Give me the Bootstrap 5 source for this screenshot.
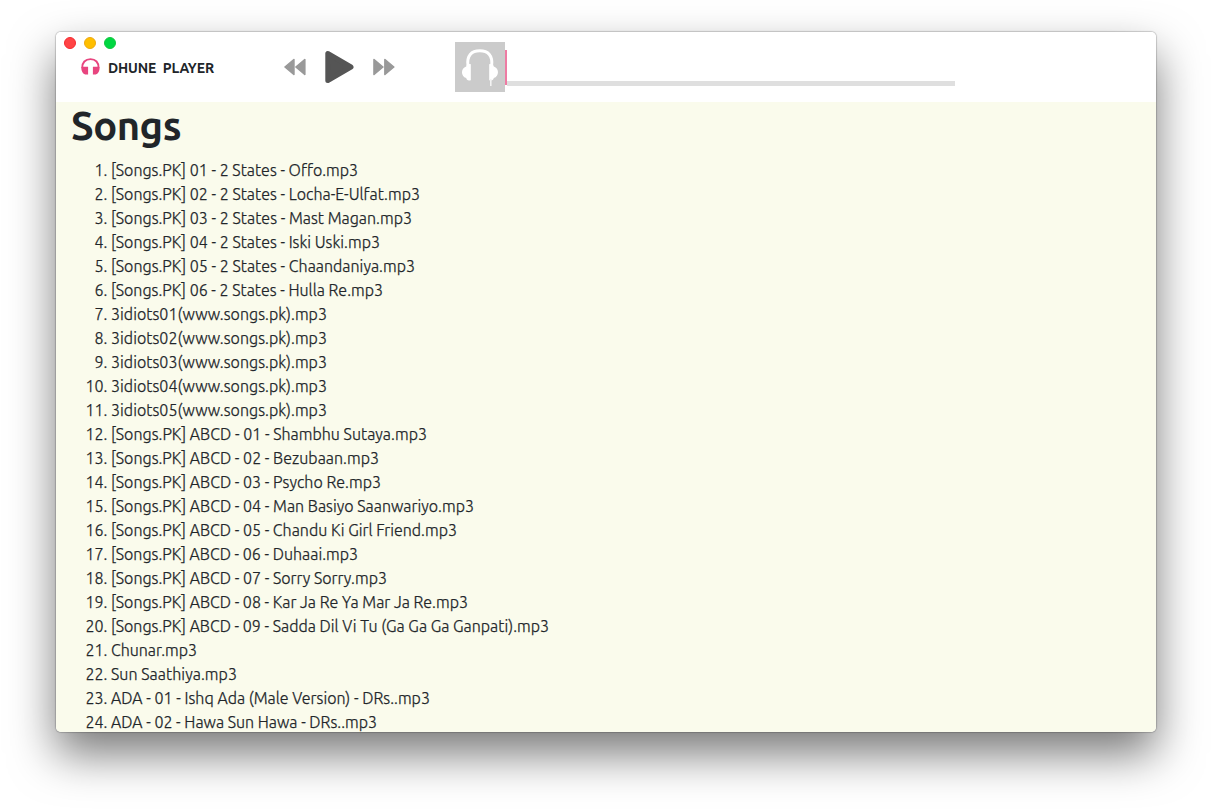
<!DOCTYPE html>
<html lang="en">
<head>
<meta charset="utf-8">
<meta name="viewport" content="width=device-width, initial-scale=1">
<title>Dhune Player</title>
<link href="https://cdn.jsdelivr.net/npm/bootstrap@5.3.0/dist/css/bootstrap.min.css" rel="stylesheet">
<style>
  body { background: #fff; font-family: Ubuntu, "Noto Sans", sans-serif; color: #212529; height: 812px; padding: 32px 56px 80px; }
  .app-window { height: 700px; border-radius: 5px; box-shadow: 0 0 1px 1px rgba(0,0,0,.18), 0 22px 46px rgba(0,0,0,.53); }
  .app-window > .clip { border-radius: 5px; }
  .player-bar { height: 70px; padding-left: 25px; background: #fff; }
  .lights { top: 5px; left: 8px; gap: 8px; }
  .light { width: 12px; height: 12px; border-radius: 50%; border: 1px solid; }
  .light.close-dot { background: #ff4445; border-color: #f52a30; }
  .light.min-dot { background: #ffbf00; border-color: #eda911; }
  .light.max-dot { background: #00d742; border-color: #12c63f; }
  .brand-name { width: 176px; font-size: 14px; font-weight: 600; line-height: 20px; gap: 8px; padding-top: 2px; }
  .controls { width: 198px; padding-left: 27px; }
  .cover { width: 50px; height: 50px; background: #cbcbcb; }
  .track { width: 450px; height: 50px; padding-bottom: 6px; }
  .track .playhead { width: 2px; height: 35px; margin-bottom: 1px; background: #ee7ba3; }
  .track .rail { height: 5px; background: #dfdfdf; }
  .library { background: #fafbec; padding: 0 15px; }
  .library h1 { font-size: 40px; line-height: 48px; font-weight: 600; }
  .songs { padding-left: 40px; font-size: 16px; font-weight: 300; line-height: 24px; -webkit-text-stroke: .25px #212529; }
  .fit { display: inline-block; white-space: nowrap; }
  .songs .fit { vertical-align: top; }
</style>
</head>
<body>
<main class="app-window">
  <div class="clip h-100 d-flex flex-column overflow-hidden position-relative">
    <div class="lights d-flex position-absolute" aria-hidden="true">
      <span class="light close-dot"></span><span class="light min-dot"></span><span class="light max-dot"></span>
    </div>
    <header class="player-bar d-flex align-items-center flex-shrink-0">
      <div class="brand-name d-flex align-items-center">
        <svg width="19" height="17" viewBox="0 0 19 17" class="mb-1"><path d="M1.200 10C1 4.500 4.400 1.100 9.500 1.100s8.300 3.400 8.100 8.900" fill="none" stroke="#e8457f" stroke-width="1.900"/><path d="M7.100 8.800v7.800H5.200C2.300 16.600.200 13.500.300 9.500c1-.8 2.500-.7 4.300-.7zM11.900 8.800v7.800h1.900c2.900 0 4.900-3.100 4.800-7.100-1-.8-2.500-.7-4.300-.7z" fill="#e8457f"/></svg>
        <span class="fit" data-width="106">DHUNE&nbsp; PLAYER</span>
      </div>
      <div class="controls d-flex align-items-center">
        <svg width="112" height="34" viewBox="0 0 112 34">
          <g fill="#999" stroke="#999" stroke-width="1.600" stroke-linejoin="round"><path d="M1 17L9.900 9.600v14.800zM11.900 17L20.800 9.600v14.800zM90 9.600L98.900 17 90 24.400zM100.900 9.600L109.800 17l-8.900 7.400z"/></g>
          <path d="M43.800 3.500v27L67 17z" fill="#555" stroke="#555" stroke-width="5" stroke-linejoin="round"/>
        </svg>
      </div>
      <div class="cover">
        <svg width="50" height="50" viewBox="0 0 50 50" class="d-block">
          <path d="M13 24C11.500 13.500 16.500 8.800 24.800 8.800S38 13.500 36.600 24" fill="none" stroke="#fff" stroke-width="3"/>
          <path d="M15.800 22.300v15.900c-2.900 1-4.200-.5-4.600-2.100-5.600-1.500-5.600-9.900 0-11.500.4-1.800 1.900-3 4.600-2.300zM34.200 22.300v15.900c2.900 1 4.200-.5 4.600-2.100 5.600-1.500 5.600-9.900 0-11.500-.4-1.800-1.900-3-4.600-2.300z" fill="#fff"/>
          <path d="M35.800 37v7" stroke="#f4f4f4" stroke-width="1.600"/>
        </svg>
      </div>
      <div class="track d-flex align-items-end"><span class="playhead"></span><span class="rail flex-grow-1"></span></div>
    </header>
    <section class="library flex-grow-1 overflow-hidden">
      <h1 class="mb-2"><span class="fit" data-width="110">Songs</span></h1>
      <ol class="songs mb-0">
        <li><span class="fit" data-width="247">[Songs.PK] 01 - 2 States - Offo.mp3</span></li>
        <li><span class="fit" data-width="309">[Songs.PK] 02 - 2 States - Locha-E-Ulfat.mp3</span></li>
        <li><span class="fit" data-width="301">[Songs.PK] 03 - 2 States - Mast Magan.mp3</span></li>
        <li><span class="fit" data-width="269">[Songs.PK] 04 - 2 States - Iski Uski.mp3</span></li>
        <li><span class="fit" data-width="304">[Songs.PK] 05 - 2 States - Chaandaniya.mp3</span></li>
        <li><span class="fit" data-width="272">[Songs.PK] 06 - 2 States - Hulla Re.mp3</span></li>
        <li><span class="fit" data-width="216">3idiots01(www.songs.pk).mp3</span></li>
        <li><span class="fit" data-width="216">3idiots02(www.songs.pk).mp3</span></li>
        <li><span class="fit" data-width="216">3idiots03(www.songs.pk).mp3</span></li>
        <li><span class="fit" data-width="216">3idiots04(www.songs.pk).mp3</span></li>
        <li><span class="fit" data-width="216">3idiots05(www.songs.pk).mp3</span></li>
        <li><span class="fit" data-width="316">[Songs.PK] ABCD - 01 - Shambhu Sutaya.mp3</span></li>
        <li><span class="fit" data-width="268">[Songs.PK] ABCD - 02 - Bezubaan.mp3</span></li>
        <li><span class="fit" data-width="270">[Songs.PK] ABCD - 03 - Psycho Re.mp3</span></li>
        <li><span class="fit" data-width="363">[Songs.PK] ABCD - 04 - Man Basiyo Saanwariyo.mp3</span></li>
        <li><span class="fit" data-width="346">[Songs.PK] ABCD - 05 - Chandu Ki Girl Friend.mp3</span></li>
        <li><span class="fit" data-width="247">[Songs.PK] ABCD - 06 - Duhaai.mp3</span></li>
        <li><span class="fit" data-width="276">[Songs.PK] ABCD - 07 - Sorry Sorry.mp3</span></li>
        <li><span class="fit" data-width="357">[Songs.PK] ABCD - 08 - Kar Ja Re Ya Mar Ja Re.mp3</span></li>
        <li><span class="fit" data-width="438">[Songs.PK] ABCD - 09 - Sadda Dil Vi Tu (Ga Ga Ga Ganpati).mp3</span></li>
        <li><span class="fit" data-width="86">Chunar.mp3</span></li>
        <li><span class="fit" data-width="126">Sun Saathiya.mp3</span></li>
        <li><span class="fit" data-width="319">ADA - 01 - Ishq Ada (Male Version) - DRs..mp3</span></li>
        <li><span class="fit" data-width="266">ADA - 02 - Hawa Sun Hawa - DRs..mp3</span></li>
      </ol>
    </section>
  </div>
</main>
<script src="https://cdn.jsdelivr.net/npm/bootstrap@5.3.0/dist/js/bootstrap.bundle.min.js"></script>
<script>
  // Track each label so that it takes the width set for it, whichever font is present.
  document.querySelectorAll('.fit').forEach(function (el) {
    var extra = Number(el.dataset.width) - el.getBoundingClientRect().width;
    el.style.letterSpacing = (extra / el.textContent.length).toFixed(3) + 'px';
  });
</script>
</body>
</html>
